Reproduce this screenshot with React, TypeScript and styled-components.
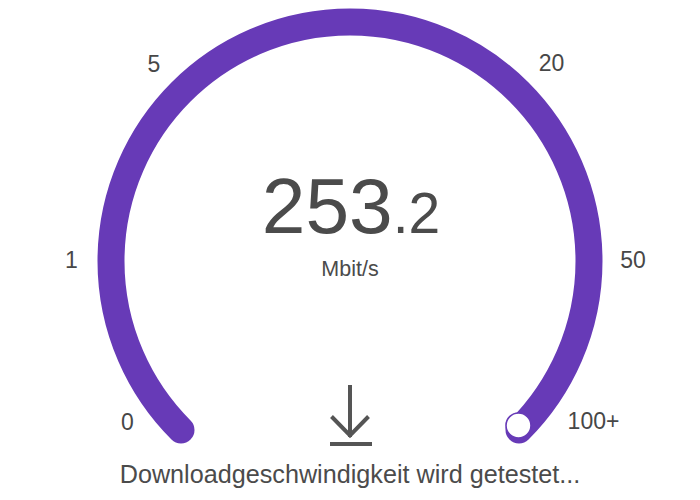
import React from "react";
import styled, { createGlobalStyle } from "styled-components";

const Global = createGlobalStyle`
  html, body { margin: 0; padding: 0; background: #ffffff; }
  body { font-family: "Liberation Sans", Arial, sans-serif; }
`;

const Page = styled.div`
  width: 700px;
  height: 500px;
  display: flex;
  flex-direction: column;
  align-items: center;
  overflow: hidden;
`;

const Gauge = styled.div`
  position: relative;
  width: 700px;
  height: 462px;
  display: flex;
  flex-direction: column;
  align-items: center;
  padding-top: 167px;
  box-sizing: border-box;
`;

const Dial = styled.svg`
  position: absolute;
  left: 0;
  top: 0;
  width: 700px;
  height: 462px;
`;

const Tick = styled.span<{ $x: number; $y: number }>`
  position: absolute;
  left: ${(p) => p.$x}px;
  top: ${(p) => p.$y}px;
  transform: translate(-50%, -50%);
  font-size: 23px;
  line-height: 1;
  color: #474747;
  white-space: nowrap;
`;

const Readout = styled.div`
  position: relative;
  display: flex;
  align-items: baseline;
  color: #4b4b4b;
  margin-left: 2px;
`;

const Whole = styled.span`
  font-size: 78.5px;
  line-height: 1;
`;

const Fraction = styled.span`
  font-size: 57px;
  line-height: 1;
`;

const Unit = styled.div`
  position: relative;
  margin-top: 13px;
  font-size: 21.5px;
  line-height: 1;
  color: #4b4b4b;
`;

const DownloadIcon = styled.svg`
  position: relative;
  margin-top: 103px;
  display: block;
`;

const Caption = styled.div`
  font-size: 25.2px;
  line-height: 1;
  color: #4b4b4b;
  white-space: nowrap;
`;

const ticks = [
  { label: "0", x: 127.5, y: 421.5 },
  { label: "1", x: 71.5, y: 259.5 },
  { label: "5", x: 154, y: 63.5 },
  { label: "20", x: 551.5, y: 62.5 },
  { label: "50", x: 633, y: 260 },
  { label: "100+", x: 593.5, y: 421 },
];

export default function App() {
  const purple = "#673ab7";
  return (
    <Page>
      <Global />
      <Gauge>
        <Dial viewBox="0 0 700 462">
          <path
            d="M 181 430 A 239 239 0 1 1 519 430"
            fill="none"
            stroke={purple}
            strokeWidth={27}
            strokeLinecap="round"
          />
          <circle cx={518.5} cy={425.5} r={12.5} fill="#ffffff" stroke={purple} strokeWidth={1.6} />
        </Dial>
        {ticks.map((t) => (
          <Tick key={t.label} $x={t.x} $y={t.y}>
            {t.label}
          </Tick>
        ))}
        <Readout>
          <Whole>253</Whole>
          <Fraction>.2</Fraction>
        </Readout>
        <Unit>Mbit/s</Unit>
        <DownloadIcon width={46} height={66} viewBox="0 0 46 66">
          <g stroke="#555555" strokeWidth={4} fill="none">
            <line x1={23} y1={2} x2={23} y2={54} />
            <polyline points="4.5,33.5 23,52.5 41.5,33.5" />
            <line x1={3} y1={61} x2={45} y2={61} />
          </g>
        </DownloadIcon>
      </Gauge>
      <Caption>Downloadgeschwindigkeit wird getestet...</Caption>
    </Page>
  );
}
